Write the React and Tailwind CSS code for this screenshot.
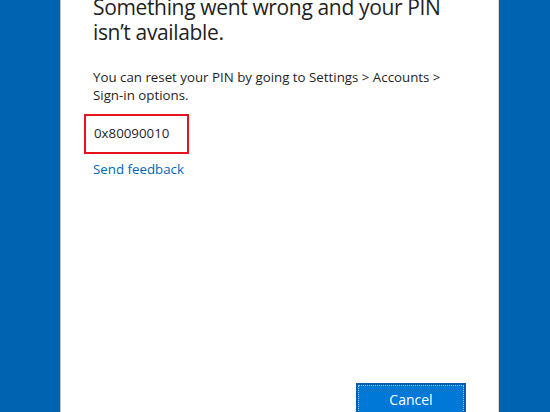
import React from 'react';

export default function App() {
  return (
    <div className="flex h-[412px] w-[550px] overflow-hidden bg-[#0063b1] font-['Open_Sans',sans-serif]">
      {/* left backdrop */}
      <div className="w-[61px] shrink-0 border-r border-[#b8c4d0] bg-[#0063b1]" />

      {/* dialog */}
      <div className="flex w-[438px] shrink-0 flex-col bg-white border-r border-[#d9d4cc]">
        <div className="pl-[32px]">
          <h1 className="mt-[-5px] w-[370px] text-[21px] leading-[25px] font-normal tracking-[-0.35px] text-[#1f1f1f]">
            Something went wrong and your PIN isn’t available.
          </h1>
          <p className="mt-[23px] w-[360px] text-[13.3px] leading-[18px] text-[#1f1f1f]">
            You can reset your PIN by going to Settings &gt; Accounts &gt; Sign-in options.
          </p>
        </div>

        <div className="ml-[23px] mt-[10px] flex h-[40px] w-[105px] items-center border-2 border-[#e8141b] pl-[8px] text-[13.3px] text-[#1f1f1f]">
          0x80090010
        </div>

        <a href="#" className="ml-[32px] mt-[6px] text-[13.3px] leading-[18px] text-[#0067b8]">
          Send feedback
        </a>

        <div className="mt-auto mb-[-3px] flex justify-end pr-[32px]">
          <button className="h-[32px] w-[110px] border-2 border-[#0a5cae] bg-[#0078d7] p-[1px] text-[14px] text-white">
            <span className="flex h-full w-full items-center justify-center outline outline-1 outline-dotted outline-[#9cc8ee]">
              Cancel
            </span>
          </button>
        </div>
      </div>

      {/* right backdrop */}
      <div className="flex-1 bg-[#0063b1]" />
    </div>
  );
}
